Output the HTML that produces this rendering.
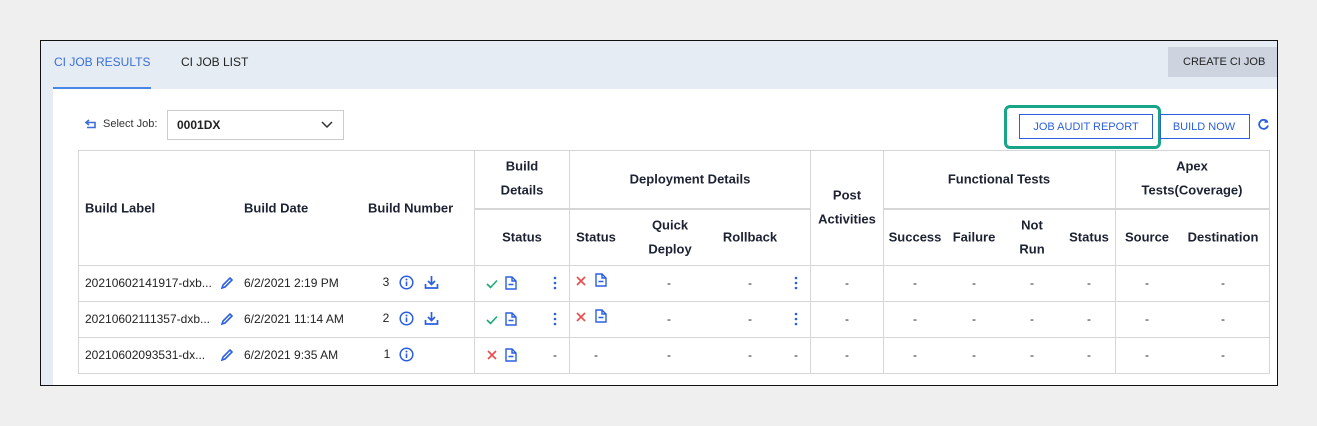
<!DOCTYPE html>
<html><head><meta charset="utf-8"><style>
*{margin:0;padding:0;box-sizing:border-box}
body{width:1317px;height:426px;background:#efefef;position:relative;overflow:hidden;font-family:"Liberation Sans",sans-serif;color:#1d2233}
.a{position:absolute;white-space:nowrap}
.c{position:absolute;white-space:nowrap;transform:translate(-50%,-50%)}
.l{position:absolute;white-space:nowrap;transform:translateY(-50%)}
.h{font-weight:bold;font-size:13px;color:#1d2233}
.d{font-size:12px;color:#222}
.v{position:absolute;width:1px;background:#d6d6d6}
.hz{position:absolute;height:1px;background:#d6d6d6}
svg{display:block}
</style></head><body>
<div class="a" style="left:40px;top:40px;width:1238px;height:346px;border:1px solid #111;background:#e5ecf3"></div>
<div class="a" style="left:53px;top:89px;width:1224px;height:296px;background:#fff"></div>
<div class="l" style="left:54px;top:62px;font-size:12px;color:#3a6fd8">CI JOB RESULTS</div>
<div class="a" style="left:53px;top:87px;width:98px;height:2px;background:#4a86e8"></div>
<div class="l" style="left:181px;top:62px;font-size:12px;color:#222">CI JOB LIST</div>
<div class="a" style="left:1168px;top:47px;width:109px;height:30px;background:#cdd4df"></div>
<div class="l" style="left:1183px;top:62px;font-size:11px;color:#222">CREATE CI JOB</div>

<svg class="a" style="left:85px;top:119px" width="12" height="10" viewBox="0 0 12 10"><path d="M4 1 L1 3.5 L4 6 M1 3.5 H10 V8.5 H2" fill="none" stroke="#3a6fd8" stroke-width="1.6"/></svg>
<div class="l" style="left:103px;top:124px;font-size:11px;color:#333">Select Job:</div>
<div class="a" style="left:167px;top:110px;width:177px;height:30px;border:1px solid #ccc"></div>
<div class="l" style="left:177px;top:125px;font-size:12px;font-weight:bold;color:#222">0001DX</div>
<svg class="a" style="left:321px;top:121px" width="12" height="8"><path d="M1 1 L6 6 L11 1" fill="none" stroke="#333" stroke-width="1.5"/></svg>

<div class="a" style="left:1004px;top:105px;width:157px;height:44px;border:3px solid #17a58a;border-radius:6px"></div>
<div class="a" style="left:1019px;top:114px;width:134px;height:25px;border:1px solid #2b5fe0"></div>
<div class="c" style="left:1086px;top:127px;font-size:11px;color:#2b5fe0">JOB AUDIT REPORT</div>
<div class="a" style="left:1160px;top:114px;width:90px;height:25px;border:1px solid #2b5fe0"></div>
<div class="c" style="left:1204px;top:127px;font-size:11px;color:#2b5fe0">BUILD NOW</div>
<svg class="a" style="left:1257px;top:118px" width="13" height="13" viewBox="0 0 13 13"><path d="M10.5 4 A4.5 4.5 0 1 0 11 7.5" fill="none" stroke="#2b5fe0" stroke-width="1.8"/><path d="M8 1 L11.5 4.5 L7.5 5 Z" fill="#2b5fe0"/></svg>

<!-- grid -->
<div class="a" style="left:78px;top:150px;width:1192px;height:224px;border:1px solid #d6d6d6"></div>
<div class="v" style="left:474px;top:150px;height:224px"></div>
<div class="v" style="left:569px;top:150px;height:224px"></div>
<div class="v" style="left:810px;top:150px;height:224px"></div>
<div class="v" style="left:883px;top:150px;height:224px"></div>
<div class="v" style="left:1115px;top:150px;height:224px"></div>
<div class="hz" style="left:474px;top:208px;width:336px;height:2px"></div>
<div class="hz" style="left:883px;top:208px;width:386px;height:2px"></div>
<div class="hz" style="left:78px;top:265px;width:1192px"></div>
<div class="hz" style="left:78px;top:301px;width:1192px"></div>
<div class="hz" style="left:78px;top:337px;width:1192px"></div>

<!-- headers -->
<div class="l h" style="left:85px;top:208px">Build Label</div>
<div class="l h" style="left:244px;top:208px">Build Date</div>
<div class="l h" style="left:368px;top:208px">Build Number</div>
<div class="c h" style="left:522px;top:166px">Build</div>
<div class="c h" style="left:522px;top:190px">Details</div>
<div class="c h" style="left:690px;top:179px">Deployment Details</div>
<div class="c h" style="left:847px;top:195px">Post</div>
<div class="c h" style="left:847px;top:219px">Activities</div>
<div class="c h" style="left:999px;top:179px">Functional Tests</div>
<div class="c h" style="left:1192px;top:166px">Apex</div>
<div class="c h" style="left:1192px;top:190px">Tests(Coverage)</div>
<div class="c h" style="left:522px;top:237px">Status</div>
<div class="c h" style="left:596px;top:237px">Status</div>
<div class="c h" style="left:670px;top:225px">Quick</div>
<div class="c h" style="left:670px;top:249px">Deploy</div>
<div class="c h" style="left:750px;top:237px">Rollback</div>
<div class="c h" style="left:915px;top:237px">Success</div>
<div class="c h" style="left:974px;top:237px">Failure</div>
<div class="c h" style="left:1032px;top:225px">Not</div>
<div class="c h" style="left:1032px;top:249px">Run</div>
<div class="c h" style="left:1089px;top:237px">Status</div>
<div class="c h" style="left:1147px;top:237px">Source</div>
<div class="c h" style="left:1223px;top:237px">Destination</div>

<!-- rows -->
<div class="l d" style="left:85px;top:283px">20210602141917-dxb...</div>
<div class="l d" style="left:85px;top:319px">20210602111357-dxb...</div>
<div class="l d" style="left:85px;top:355px">20210602093531-dx...</div>
<div class="l d" style="left:244px;top:283px">6/2/2021 2:19 PM</div>
<div class="l d" style="left:244px;top:319px">6/2/2021 11:14 AM</div>
<div class="l d" style="left:244px;top:355px">6/2/2021 9:35 AM</div>
<div class="c d" style="left:386px;top:282px">3</div>
<div class="c d" style="left:386px;top:318px">2</div>
<div class="c d" style="left:387px;top:354px">1</div>

<!-- pencils -->
<svg class="a" style="left:220px;top:276px" width="14" height="14"><path d="M2 12 L3 9 L10 2 L12 4 L5 11 Z" fill="none" stroke="#2b5fe0" stroke-width="1.6"/></svg>
<svg class="a" style="left:220px;top:312px" width="14" height="14"><path d="M2 12 L3 9 L10 2 L12 4 L5 11 Z" fill="none" stroke="#2b5fe0" stroke-width="1.6"/></svg>
<svg class="a" style="left:220px;top:348px" width="14" height="14"><path d="M2 12 L3 9 L10 2 L12 4 L5 11 Z" fill="none" stroke="#2b5fe0" stroke-width="1.6"/></svg>
<!-- info -->
<svg class="a" style="left:399px;top:275px" width="15" height="15"><circle cx="7.5" cy="7.5" r="6.3" fill="none" stroke="#2b5fe0" stroke-width="1.5"/><circle cx="7.5" cy="4.5" r="1" fill="#2b5fe0"/><path d="M7.5 6.5 V11" stroke="#2b5fe0" stroke-width="1.6"/></svg>
<svg class="a" style="left:399px;top:311px" width="15" height="15"><circle cx="7.5" cy="7.5" r="6.3" fill="none" stroke="#2b5fe0" stroke-width="1.5"/><circle cx="7.5" cy="4.5" r="1" fill="#2b5fe0"/><path d="M7.5 6.5 V11" stroke="#2b5fe0" stroke-width="1.6"/></svg>
<svg class="a" style="left:399px;top:347px" width="15" height="15"><circle cx="7.5" cy="7.5" r="6.3" fill="none" stroke="#2b5fe0" stroke-width="1.5"/><circle cx="7.5" cy="4.5" r="1" fill="#2b5fe0"/><path d="M7.5 6.5 V11" stroke="#2b5fe0" stroke-width="1.6"/></svg>
<!-- download -->
<svg class="a" style="left:424px;top:275px" width="15" height="15"><path d="M7.5 1 V9 M4 6 L7.5 9.5 L11 6 M1.5 9 V13 H13.5 V9" fill="none" stroke="#2b5fe0" stroke-width="1.7"/></svg>
<svg class="a" style="left:424px;top:311px" width="15" height="15"><path d="M7.5 1 V9 M4 6 L7.5 9.5 L11 6 M1.5 9 V13 H13.5 V9" fill="none" stroke="#2b5fe0" stroke-width="1.7"/></svg>

<!-- build status -->
<svg class="a" style="left:486px;top:279px" width="12" height="10"><path d="M1 5 L4.5 8.5 L11 1.5" fill="none" stroke="#1aab74" stroke-width="1.6"/></svg>
<svg class="a" style="left:486px;top:315px" width="12" height="10"><path d="M1 5 L4.5 8.5 L11 1.5" fill="none" stroke="#1aab74" stroke-width="1.6"/></svg>
<svg class="a" style="left:487px;top:350px" width="10" height="10"><path d="M1 1 L9 9 M9 1 L1 9" stroke="#e84b4b" stroke-width="1.6"/></svg>
<!-- docs -->
<svg class="a" style="left:505px;top:276px" width="12" height="14"><path d="M1 1 H7 L11 5 V13 H1 Z M7 1 V5 H11 M3.5 8.5 H8.5" fill="none" stroke="#2b5fe0" stroke-width="1.4"/></svg>
<svg class="a" style="left:505px;top:312px" width="12" height="14"><path d="M1 1 H7 L11 5 V13 H1 Z M7 1 V5 H11 M3.5 8.5 H8.5" fill="none" stroke="#2b5fe0" stroke-width="1.4"/></svg>
<svg class="a" style="left:505px;top:348px" width="12" height="14"><path d="M1 1 H7 L11 5 V13 H1 Z M7 1 V5 H11 M3.5 8.5 H8.5" fill="none" stroke="#2b5fe0" stroke-width="1.4"/></svg>
<svg class="a" style="left:595px;top:273px" width="12" height="14"><path d="M1 1 H7 L11 5 V13 H1 Z M7 1 V5 H11 M3.5 8.5 H8.5" fill="none" stroke="#2b5fe0" stroke-width="1.4"/></svg>
<svg class="a" style="left:595px;top:309px" width="12" height="14"><path d="M1 1 H7 L11 5 V13 H1 Z M7 1 V5 H11 M3.5 8.5 H8.5" fill="none" stroke="#2b5fe0" stroke-width="1.4"/></svg>
<!-- deploy X -->
<svg class="a" style="left:576px;top:276px" width="10" height="10"><path d="M1 1 L9 9 M9 1 L1 9" stroke="#e84b4b" stroke-width="1.6"/></svg>
<svg class="a" style="left:576px;top:312px" width="10" height="10"><path d="M1 1 L9 9 M9 1 L1 9" stroke="#e84b4b" stroke-width="1.6"/></svg>
<!-- dots -->
<svg class="a" style="left:553px;top:276px" width="4" height="14"><circle cx="2" cy="2" r="1.3" fill="#2b5fe0"/><circle cx="2" cy="7" r="1.3" fill="#2b5fe0"/><circle cx="2" cy="12" r="1.3" fill="#2b5fe0"/></svg>
<svg class="a" style="left:553px;top:312px" width="4" height="14"><circle cx="2" cy="2" r="1.3" fill="#2b5fe0"/><circle cx="2" cy="7" r="1.3" fill="#2b5fe0"/><circle cx="2" cy="12" r="1.3" fill="#2b5fe0"/></svg>
<svg class="a" style="left:794px;top:276px" width="4" height="14"><circle cx="2" cy="2" r="1.3" fill="#2b5fe0"/><circle cx="2" cy="7" r="1.3" fill="#2b5fe0"/><circle cx="2" cy="12" r="1.3" fill="#2b5fe0"/></svg>
<svg class="a" style="left:794px;top:312px" width="4" height="14"><circle cx="2" cy="2" r="1.3" fill="#2b5fe0"/><circle cx="2" cy="7" r="1.3" fill="#2b5fe0"/><circle cx="2" cy="12" r="1.3" fill="#2b5fe0"/></svg>

<!-- dashes -->
<div class="d">
<div class="c" style="left:669px;top:283px">-</div><div class="c" style="left:750px;top:283px">-</div>
<div class="c" style="left:669px;top:319px">-</div><div class="c" style="left:750px;top:319px">-</div>
<div class="c" style="left:555px;top:355px">-</div><div class="c" style="left:596px;top:355px">-</div><div class="c" style="left:669px;top:355px">-</div><div class="c" style="left:750px;top:355px">-</div><div class="c" style="left:796px;top:355px">-</div>
<div class="c" style="left:847px;top:283px">-</div><div class="c" style="left:915px;top:283px">-</div><div class="c" style="left:974px;top:283px">-</div><div class="c" style="left:1032px;top:283px">-</div><div class="c" style="left:1089px;top:283px">-</div><div class="c" style="left:1147px;top:283px">-</div><div class="c" style="left:1223px;top:283px">-</div>
<div class="c" style="left:847px;top:319px">-</div><div class="c" style="left:915px;top:319px">-</div><div class="c" style="left:974px;top:319px">-</div><div class="c" style="left:1032px;top:319px">-</div><div class="c" style="left:1089px;top:319px">-</div><div class="c" style="left:1147px;top:319px">-</div><div class="c" style="left:1223px;top:319px">-</div>
<div class="c" style="left:847px;top:355px">-</div><div class="c" style="left:915px;top:355px">-</div><div class="c" style="left:974px;top:355px">-</div><div class="c" style="left:1032px;top:355px">-</div><div class="c" style="left:1089px;top:355px">-</div><div class="c" style="left:1147px;top:355px">-</div><div class="c" style="left:1223px;top:355px">-</div>
</div>
</body></html>
